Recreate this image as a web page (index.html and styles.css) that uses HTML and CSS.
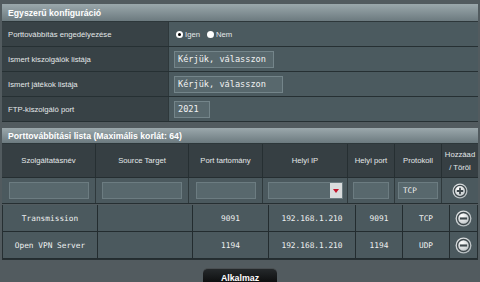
FILE: index.html
```html
<!DOCTYPE html>
<html lang="hu">
<head>
<meta charset="utf-8">
<title>Porttovábbítás</title>
<link rel="stylesheet" href="styles.css">
</head>
<body>
<div class="page">
  <section class="cfg">
    <div class="bar">Egyszerű konfiguráció</div>
    <div class="row">
      <div class="lbl">Porttovábbítás engedélyezése</div>
      <div class="val">
        <label class="radio"><span class="dot on"></span>Igen</label>
        <label class="radio"><span class="dot"></span>Nem</label>
      </div>
    </div>
    <div class="row">
      <div class="lbl">Ismert kiszolgálók listája</div>
      <div class="val"><span class="txt w100">Kérjük, válasszon</span></div>
    </div>
    <div class="row">
      <div class="lbl">Ismert játékok listája</div>
      <div class="val"><span class="txt w109">Kérjük, válasszon</span></div>
    </div>
    <div class="row">
      <div class="lbl">FTP-kiszolgáló port</div>
      <div class="val"><span class="txt w36">2021</span></div>
    </div>
  </section>

  <section class="list">
    <div class="bar bar2">Porttovábbítási lista (Maximális korlát: 64)</div>
    <div class="grid head">
      <div class="cell">Szolgáltatásnév</div>
      <div class="cell">Source Target</div>
      <div class="cell">Port tartomány</div>
      <div class="cell">Helyi IP</div>
      <div class="cell">Helyi port</div>
      <div class="cell">Protokoll</div>
      <div class="cell">Hozzáad<br>/ Töröl</div>
    </div>
    <div class="grid inputs">
      <div class="cell"><span class="box b80"></span></div>
      <div class="cell"><span class="box b80"></span></div>
      <div class="cell"><span class="box b60"></span></div>
      <div class="cell"><span class="box sel"><span class="arrow"></span></span></div>
      <div class="cell"><span class="box b36"></span></div>
      <div class="cell"><span class="box b40 proto">TCP</span></div>
      <div class="cell">
        <svg class="ico plus" width="16" height="16" viewBox="0 0 16 16">
          <defs><radialGradient id="g1" cx="40%" cy="35%" r="70%"><stop offset="0" stop-color="#ffffff"/><stop offset="1" stop-color="#aeb6b9"/></radialGradient></defs>
          <circle cx="8" cy="8" r="7.5" fill="url(#g1)"/>
          <circle cx="8" cy="8" r="5.6" fill="none" stroke="#3f494d" stroke-width="1.3"/>
          <path d="M8 4.8V11.2M4.8 8H11.2" stroke="#3f494d" stroke-width="1.8"/>
        </svg>
      </div>
    </div>
  </section>

  <section class="grid data">
    <div class="cell">Transmission</div>
    <div class="cell"></div>
    <div class="cell">9091</div>
    <div class="cell">192.168.1.210</div>
    <div class="cell">9091</div>
    <div class="cell">TCP</div>
    <div class="cell">
      <svg class="ico" width="17" height="17" viewBox="0 0 16 16">
        <defs><radialGradient id="g2" cx="40%" cy="35%" r="70%"><stop offset="0" stop-color="#ffffff"/><stop offset="1" stop-color="#aeb6b9"/></radialGradient></defs>
        <circle cx="8" cy="8" r="7.5" fill="url(#g2)"/>
        <circle cx="8" cy="8" r="5.6" fill="none" stroke="#3f494d" stroke-width="1.3"/>
        <path d="M4.6 8H11.4" stroke="#3f494d" stroke-width="2"/>
      </svg>
    </div>
    <div class="cell">Open VPN Server</div>
    <div class="cell"></div>
    <div class="cell">1194</div>
    <div class="cell">192.168.1.210</div>
    <div class="cell">1194</div>
    <div class="cell">UDP</div>
    <div class="cell">
      <svg class="ico" width="17" height="17" viewBox="0 0 16 16">
        <circle cx="8" cy="8" r="7.5" fill="url(#g2)"/>
        <circle cx="8" cy="8" r="5.6" fill="none" stroke="#3f494d" stroke-width="1.3"/>
        <path d="M4.6 8H11.4" stroke="#3f494d" stroke-width="2"/>
      </svg>
    </div>
  </section>

  <div class="actions"><button class="apply">Alkalmaz</button></div>
</div>
</body>
</html>
```
FILE: styles.css
```css
* { box-sizing: border-box; }
html, body { margin: 0; height: 100%; }
body {
  background: #525b5f;
  font-family: "Liberation Sans", Arial, sans-serif;
  color: #e4e8e9;
  overflow: hidden;
}
.page { padding: 4px 2px 0; }

.bar {
  height: 18px;
  display: flex;
  align-items: center;
  padding-left: 6px;
  font-weight: bold;
  font-size: 8.7px;
  color: #fff;
  background: linear-gradient(#9ba8ac, #6c7a7f);
  border-bottom: 1px solid #2d373a;
}
.bar2 { height: 16px; }

.cfg .row {
  display: flex;
  height: 25px;
  border-bottom: 1px solid #263033;
}
.lbl {
  width: 167px;
  background: #384246;
  display: flex;
  align-items: center;
  padding-left: 6px;
  font-size: 7.7px;
  border-right: 1px solid #2e383b;
}
.val {
  flex: 1;
  background: #4b5a5f;
  display: flex;
  align-items: center;
  padding-left: 5px;
  font-size: 7.7px;
}
.radio { display: flex; align-items: center; margin-right: 5px; margin-left: 2px; }
.dot {
  width: 7px; height: 7px; border-radius: 50%;
  background: #fff; margin-right: 2px;
  display: inline-flex; align-items: center; justify-content: center;
}
.dot.on::after { content: ""; width: 3px; height: 3px; border-radius: 50%; background: #000; }

.txt {
  height: 17px;
  display: flex;
  align-items: center;
  padding: 0 3px;
  border: 1px solid #74858a;
  background: #58686d;
  font-family: "DejaVu Sans Mono", monospace;
  font-size: 8.6px;
  color: #f2f2f2;
}
.w100 { width: 100px; }
.w109 { width: 109px; }
.w36 { width: 36px; }

.list { margin-top: 6px; }
.grid { display: grid; }
.head, .inputs { grid-template-columns: 94px 93px 74px 85px 47px 47px 1fr; }
.head { background: #363f43; height: 34px; border-bottom: 1px solid #252e31; }
.head .cell {
  display: flex; align-items: center; justify-content: center; text-align: center;
  font-size: 7.7px; line-height: 13px; border-right: 1px solid #262f32;
}
.inputs { background: #4b595e; height: 26px; border-bottom: 1px solid #262f32; }
.inputs .cell { display: flex; align-items: center; justify-content: center; border-right: 1px solid #2f393c; }
.head .cell:last-child, .inputs .cell:last-child, .data .cell:nth-child(7n) { border-right: 0; }
.box {
  height: 17px;
  border: 1px solid #6c7c81;
  background: #58686d;
  display: flex; align-items: center;
}
.b80 { width: 80px; }
.b60 { width: 60px; }
.b36 { width: 36px; }
.b40 { width: 40px; }
.sel { width: 75px; justify-content: flex-end; padding: 0; }
.arrow {
  width: 12px; height: 15px; background: #d9dcdd;
  display: flex; align-items: center; justify-content: center;
}
.arrow::after {
  content: ""; border-left: 3px solid transparent; border-right: 3px solid transparent;
  border-top: 4px solid #c3162c;
}
.proto {
  padding-left: 4px;
  font-family: "DejaVu Sans Mono", monospace; font-size: 7.6px; color: #f2f2f2;
}
.ico { display: block; }

.data {
  grid-template-columns: 95px 95px 76px 87px 47px 47px 1fr;
  grid-auto-rows: 27px;
  margin-top: 1px;
  background: #4b595e;
  border: 1px solid #262f32;
  border-top: 0;
}
.data .cell {
  display: flex; align-items: center; justify-content: center;
  font-family: "DejaVu Sans Mono", monospace; font-size: 7.8px; color: #eef0f0;
  border-right: 1px solid #232c2f; border-bottom: 1px solid #232c2f;
}

.actions { display: flex; justify-content: center; margin-top: 8px; }
.apply {
  width: 74px; height: 22px;
  border: 0; border-top: 1px solid #4a4f52;
  border-radius: 5px;
  background: linear-gradient(#25292b, #000);
  color: #fff; font-family: "Liberation Sans", Arial, sans-serif;
  font-weight: bold; font-size: 8.8px;
  padding: 0 0 4px;
}
```
